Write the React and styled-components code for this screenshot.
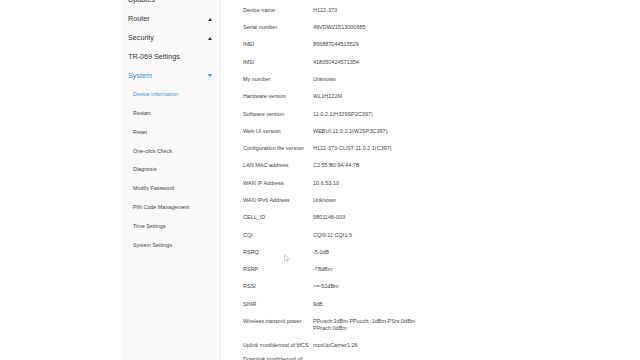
import React from 'react';
import styled, { createGlobalStyle } from 'styled-components';

const Global = createGlobalStyle`
  html, body { margin: 0; padding: 0; background: #fff; }
  body { font-family: "Liberation Sans", Arial, sans-serif; overflow: hidden; }
  #root { height: 360px; }
`;

const Page = styled.div`
  position: relative;
  display: flex;
  height: 360px;
  overflow: hidden;
  padding-left: 121px;
`;

const Sidebar = styled.nav`
  width: 100px;
  flex: none;
  box-sizing: border-box;
  background: #f9f9f9;
  border-right: 1px solid #f0f0f0;
`;

const NavList = styled.ul`
  list-style: none;
  margin: -9.6px 0 0;
  padding: 0;
`;

const NavItem = styled.li`
  height: 18.85px;
  display: flex;
  align-items: center;
  justify-content: space-between;
  padding: 0 8px 0 ${p => (p.$sub ? '12px' : '7px')};
  font-size: ${p => (p.$sub ? '5.4px' : '7.2px')};
  color: ${p => (p.$active ? '#3d8fe0' : p.$sub ? '#444' : '#333')};
  white-space: nowrap;
`;

const Arrow = styled.svg`
  width: 4px;
  height: 3px;
  flex: none;
  margin-top: 1px;
`;

const Main = styled.main`
  flex: 1;
  padding: 1.6px 0 0 22px;
`;

const InfoTable = styled.div`
  display: flex;
  flex-direction: column;
  width: 182px;
`;

const Row = styled.div`
  display: flex;
  box-sizing: border-box;
  min-height: 17.3px;
  align-items: ${p => (p.$top ? 'flex-start' : 'center')};
  padding: ${p => (p.$top ? '5.15px 0' : '0')};
  font-size: 5.5px;
  line-height: 7px;
  color: #444;
`;

const Label = styled.div`
  width: 70px;
  flex: none;
`;

const Value = styled.div`
  width: 112px;
`;

const Cursor = styled.svg`
  position: absolute;
  left: 284px;
  top: 254px;
  width: 6px;
  height: 9px;
`;

const topItems = [
  { label: 'Updates' },
  { label: 'Router', arrow: 'up' },
  { label: 'Security', arrow: 'up' },
  { label: 'TR-069 Settings' },
  { label: 'System', arrow: 'down', active: true },
];

const subItems = [
  'Device Information',
  'Restart',
  'Reset',
  'One-click Check',
  'Diagnosis',
  'Modify Password',
  'PIN Code Management',
  'Time Settings',
  'System Settings',
];

const rows = [
  ['Device name', 'H122-373'],
  ['Serial number', '49VDW21513000685'],
  ['IMEI', '866887044515529'],
  ['IMSI', '418050424571354'],
  ['My number', 'Unknown'],
  ['Hardware version', 'WL1H122M'],
  ['Software version', '11.0.2.1(H329SP2C397)'],
  ['Web UI version', 'WEBUI 11.0.2.1(W2SP3C397)'],
  ['Configuration file version', 'H122-373-CUST 11.0.2.1(C397)'],
  ['LAN MAC address', 'C2:55:B0:94:44:7B'],
  ['WAN IP Address', '10.6.53.10'],
  ['WAN IPv6 Address', 'Unknown'],
  ['CELL_ID', '0801146-003'],
  ['CQI', 'CQI0:11 CQI1:5'],
  ['RSRQ', '-5.0dB'],
  ['RSRP', '-78dBm'],
  ['RSSI', '>=-51dBm'],
  ['SINR', '9dB'],
  ['Wireless transmit power', 'PPusch:1dBm PPucch:-1dBm PSrs:0dBm PPrach:0dBm', true],
  ['Uplink mod/demod of MCS', 'mcsUpCarrier1:26'],
  ['Downlink mod/demod of MCS', 'mcsDownCarrier1:24'],
];

function Caret({ dir, color }) {
  return (
    <Arrow viewBox="0 0 4 3">
      {dir === 'up' ? (
        <polygon points="0,3 4,3 2,0" fill={color} />
      ) : (
        <polygon points="0,0 4,0 2,3" fill={color} />
      )}
    </Arrow>
  );
}

export default function App() {
  return (
    <>
      <Global />
      <Page>
        <Sidebar>
          <NavList>
            {topItems.map(item => (
              <NavItem key={item.label} $active={item.active}>
                <span>{item.label}</span>
                {item.arrow && (
                  <Caret dir={item.arrow} color={item.active ? '#3d8fe0' : '#333'} />
                )}
              </NavItem>
            ))}
            {subItems.map((s, i) => (
              <NavItem key={s} $sub $active={i === 0}>
                <span>{s}</span>
              </NavItem>
            ))}
          </NavList>
        </Sidebar>
        <Main>
          <InfoTable>
            {rows.map(([l, v, top]) => (
              <Row key={l} $top={top}>
                <Label>{l}</Label>
                <Value>{v}</Value>
              </Row>
            ))}
          </InfoTable>
        </Main>
        <Cursor viewBox="0 0 12 18">
          <path d="M1 1 L1 14 L4 11 L6.5 16.5 L8.5 15.5 L6 10 L10.5 10 Z" fill="#fff" stroke="#999" strokeWidth="1" />
        </Cursor>
      </Page>
    </>
  );
}
